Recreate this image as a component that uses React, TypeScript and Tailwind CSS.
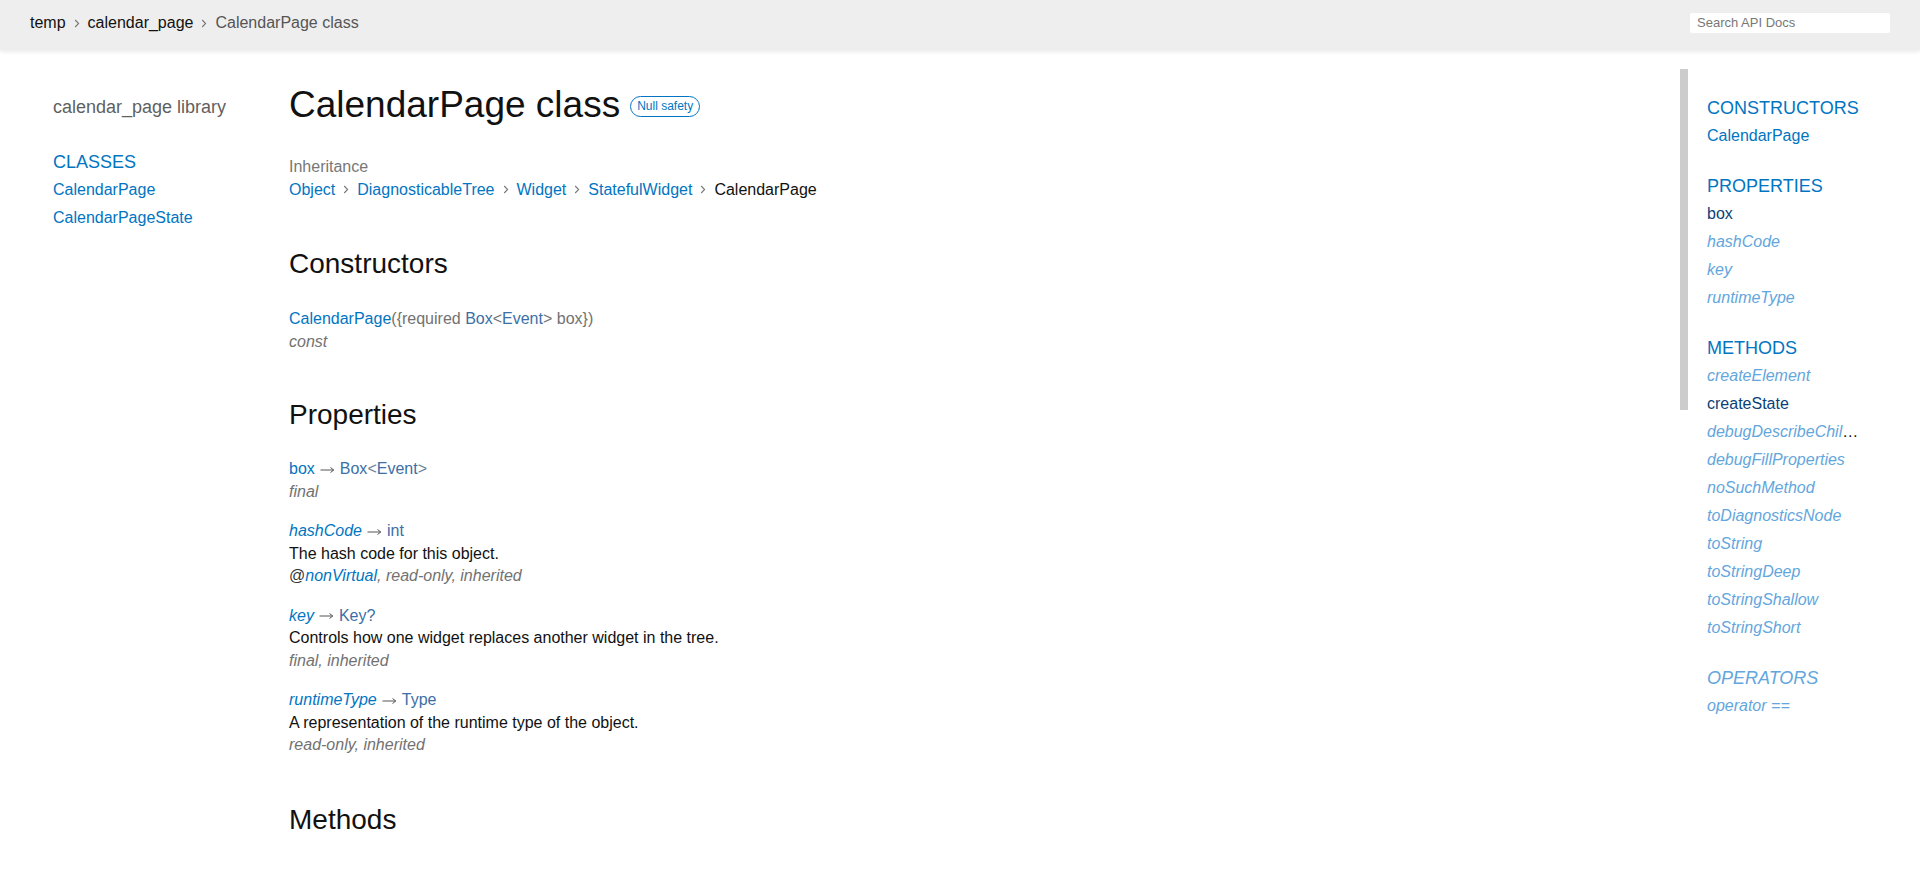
import React from 'react';

const font = { fontFamily: '"Liberation Sans", Arial, sans-serif' };

function Chevron({ className = '' }: { className?: string }) {
  return (
    <svg width="6" height="9" viewBox="0 0 6 9" className={className}>
      <path d="M1.2 1 L4.6 4.5 L1.2 8" fill="none" stroke="#777" strokeWidth="1.1" />
    </svg>
  );
}

// long thin arrow used between a member name and its type
function Arrow() {
  return (
    <svg width="15" height="8" viewBox="0 0 15 8" className="mx-[5px] inline-block align-middle">
      <path d="M0.5 4 H13.5 M10.5 1.5 L13.8 4 L10.5 6.5" fill="none" stroke="#555" strokeWidth="1" />
    </svg>
  );
}

const blue = 'text-[#0175c2]';
const typeBlue = 'text-[#3b6fa6]';
const gray = 'text-[#727272]';

function Header() {
  return (
    <header className="flex h-[50px] items-center justify-between bg-[#eeeeee] px-[30px] shadow-[0_2px_4px_rgba(0,0,0,0.08)]">
      <ol className="flex items-center pb-[4px] text-[16px]">
        <li className="text-[#111]">temp</li>
        <Chevron className="mx-[8px]" />
        <li className="text-[#111]">calendar_page</li>
        <Chevron className="mx-[8px]" />
        <li className="text-[#555]">CalendarPage class</li>
      </ol>
      <div className="mb-[4px] flex h-[20px] w-[200px] items-center rounded-[2px] bg-white px-[7px] text-[13px] text-[#777]">
        Search API Docs
      </div>
    </header>
  );
}

function LeftSidebar() {
  return (
    <aside className="w-[289px] shrink-0 pl-[53px] pt-[43px]">
      <h5 className="text-[18px] leading-[28px] text-[#5f5f5f]">calendar_page library</h5>
      <ol className={`mt-[28px] text-[16px] leading-[28px] ${blue}`}>
        <li className="text-[18px] leading-[27px]">CLASSES</li>
        <li>CalendarPage</li>
        <li>CalendarPageState</li>
      </ol>
    </aside>
  );
}

type Prop = {
  name: string;
  inherited?: boolean;
  type: React.ReactNode;
  desc?: string;
  features: React.ReactNode;
};

const props: Prop[] = [
  {
    name: 'box',
    type: (
      <>
        <span>Box</span>
        <span className="text-[#6a7f96]">&lt;</span>
        <span>Event</span>
        <span className="text-[#6a7f96]">&gt;</span>
      </>
    ),
    features: 'final',
  },
  {
    name: 'hashCode',
    inherited: true,
    type: 'int',
    desc: 'The hash code for this object.',
    features: (
      <>
        <span className="not-italic text-[#333]">@</span>
        <span className={blue}>nonVirtual</span>, read-only, inherited
      </>
    ),
  },
  { name: 'key', inherited: true, type: 'Key?', desc: 'Controls how one widget replaces another widget in the tree.', features: 'final, inherited' },
  { name: 'runtimeType', inherited: true, type: 'Type', desc: 'A representation of the runtime type of the object.', features: 'read-only, inherited' },
];

function Main() {
  return (
    <main className="flex-1 pt-[35px] text-[16px] leading-[22.5px] text-[#111]">
      <div className="flex items-center">
        <h1 className="text-[37px] leading-[40px] text-[#111]">CalendarPage class</h1>
        <span className={`ml-[10px] mt-[3px] flex h-[21px] items-center rounded-full border border-[#0175c2] px-[6px] text-[12px] ${blue}`}>
          Null safety
        </span>
      </div>

      <dl className="mt-[31px]">
        <dt className="text-[#777]">Inheritance</dt>
        <dd className="flex items-center">
          {['Object', 'DiagnosticableTree', 'Widget', 'StatefulWidget'].map((c) => (
            <React.Fragment key={c}>
              <span className={blue}>{c}</span>
              <Chevron className="mx-[8px]" />
            </React.Fragment>
          ))}
          <span>CalendarPage</span>
        </dd>
      </dl>

      <h2 className="mt-[47px] text-[28px] leading-[32px]">Constructors</h2>
      <dl className="mt-[28px]">
        <dt>
          <span className={blue}>CalendarPage</span>
          <span className={gray}>({'{'}required </span>
          <span className={typeBlue}>Box</span>
          <span className={gray}>&lt;</span>
          <span className={typeBlue}>Event</span>
          <span className={gray}>&gt; box{'}'})</span>
        </dt>
        <dd className={`italic ${gray}`}>const</dd>
      </dl>

      <h2 className="mt-[46px] text-[28px] leading-[32px]">Properties</h2>
      <dl className="mt-[27px]">
        {props.map((p) => (
          <div key={p.name} className="mb-[17px]">
            <dt className="h-[22.5px]">
              <span className={`${blue} ${p.inherited ? 'italic' : ''}`}>{p.name}</span>
              <Arrow />
              <span className={typeBlue}>{p.type}</span>
            </dt>
            {p.desc && <dd>{p.desc}</dd>}
            <dd className={`italic ${gray}`}>{p.features}</dd>
          </div>
        ))}
      </dl>

      <h2 className="mt-[47px] text-[28px] leading-[32px]">Methods</h2>
    </main>
  );
}

type Item = { label: string; inherited?: boolean; own?: boolean };

const sections: { title: string; inherited?: boolean; items: Item[] }[] = [
  { title: 'CONSTRUCTORS', items: [{ label: 'CalendarPage' }] },
  {
    title: 'PROPERTIES',
    items: [
      { label: 'box', own: true },
      { label: 'hashCode', inherited: true },
      { label: 'key', inherited: true },
      { label: 'runtimeType', inherited: true },
    ],
  },
  {
    title: 'METHODS',
    items: [
      { label: 'createElement', inherited: true },
      { label: 'createState', own: true },
      { label: 'debugDescribeChildren', inherited: true },
      { label: 'debugFillProperties', inherited: true },
      { label: 'noSuchMethod', inherited: true },
      { label: 'toDiagnosticsNode', inherited: true },
      { label: 'toString', inherited: true },
      { label: 'toStringDeep', inherited: true },
      { label: 'toStringShallow', inherited: true },
      { label: 'toStringShort', inherited: true },
    ],
  },
  { title: 'OPERATORS', inherited: true, items: [{ label: 'operator ==', inherited: true }] },
];

function RightSidebar() {
  return (
    <aside className="flex w-[240px] shrink-0 pt-[19px]">
      <div className="h-[341px] w-[8px] shrink-0 bg-[#cccccc]" />
      <div className="w-[177px] pl-[19px] pt-[25px]">
        {sections.map((s, i) => (
          <ol key={s.title} className={i > 0 ? 'mt-[22px]' : ''}>
            <li className={`text-[18px] leading-[28px] ${s.inherited ? 'italic text-[#63a6dd]' : blue}`}>
              {s.title}
            </li>
            {s.items.map((it) => (
              <li
                key={it.label}
                className="overflow-hidden text-ellipsis whitespace-nowrap text-[16px] leading-[28px] text-[#111]"
              >
                <span className={it.inherited ? 'italic text-[#63a6dd]' : it.own ? 'text-[#0b3f78]' : blue}>
                  {it.label}
                </span>
              </li>
            ))}
          </ol>
        ))}
      </div>
    </aside>
  );
}

export default function App() {
  return (
    <div className="h-[880px] w-[1920px] overflow-hidden bg-white" style={font}>
      <Header />
      <div className="flex">
        <LeftSidebar />
        <Main />
        <RightSidebar />
      </div>
    </div>
  );
}
